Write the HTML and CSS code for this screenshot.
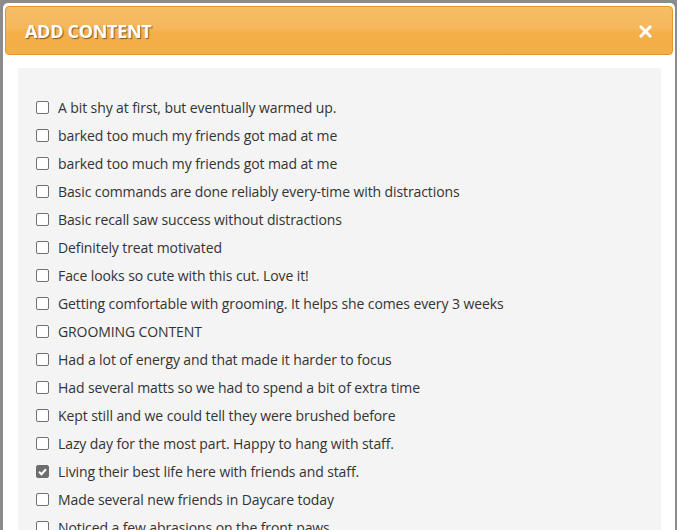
FILE: index.html
```html
<!DOCTYPE html>
<html>
<head>
<meta charset="utf-8">
<link rel="stylesheet" href="styles.css">
</head>
<body>
<div class="dialog">
  <div class="header">
    <span class="title">ADD CONTENT</span>
    <svg class="close" viewBox="0 0 13 13" width="13" height="13"><path d="M2 2 L11 11 M11 2 L2 11" stroke="#fff" stroke-width="3" stroke-linecap="square"/></svg>
  </div>
  <div class="panel">
    <ul class="list">
      <li><span class="box"></span><span>A bit shy at first, but eventually warmed up.</span></li>
      <li><span class="box"></span><span>barked too much my friends got mad at me</span></li>
      <li><span class="box"></span><span>barked too much my friends got mad at me</span></li>
      <li><span class="box"></span><span>Basic commands are done reliably every-time with distractions</span></li>
      <li><span class="box"></span><span>Basic recall saw success without distractions</span></li>
      <li><span class="box"></span><span>Definitely treat motivated</span></li>
      <li><span class="box"></span><span>Face looks so cute with this cut. Love it!</span></li>
      <li><span class="box"></span><span>Getting comfortable with grooming. It helps she comes every 3 weeks</span></li>
      <li><span class="box"></span><span>GROOMING CONTENT</span></li>
      <li><span class="box"></span><span>Had a lot of energy and that made it harder to focus</span></li>
      <li><span class="box"></span><span>Had several matts so we had to spend a bit of extra time</span></li>
      <li><span class="box"></span><span>Kept still and we could tell they were brushed before</span></li>
      <li><span class="box"></span><span>Lazy day for the most part. Happy to hang with staff.</span></li>
      <li><span class="box checked"><svg viewBox="0 0 13 13" width="13" height="13"><path d="M3 6.8 L5.4 9.2 L10 4.2" fill="none" stroke="#fff" stroke-width="2"/></svg></span><span>Living their best life here with friends and staff.</span></li>
      <li><span class="box"></span><span>Made several new friends in Daycare today</span></li>
      <li><span class="box"></span><span>Noticed a few abrasions on the front paws</span></li>
    </ul>
  </div>
</div>
</body>
</html>
```
FILE: styles.css
```css
html, body {
  margin: 0;
  padding: 0;
  height: 100%;
  overflow: hidden;
}
body {
  background: #8b8b8b;
  font-family: "Open Sans", "Noto Sans", sans-serif;
}
.dialog {
  margin: 3px 2px 0 3px;
  background: #fff;
  border-radius: 5px 5px 0 0;
  padding: 3px 2px 0 2px;
  height: 600px;
}
.header {
  height: 47px;
  border: 1px solid #e4952e;
  border-radius: 4px;
  background: linear-gradient(to bottom, #f6be66 0%, #f5b75a 45%, #f4af48 55%, #f4ae46 100%);
  display: flex;
  align-items: center;
  justify-content: space-between;
  padding: 0 20px 0 19px;
}
.title {
  color: #fff;
  font-weight: 700;
  font-size: 18px;
  letter-spacing: -0.3px;
  text-shadow: 1px 1px 1px rgba(90, 60, 20, 0.75);
  padding-top: 1px;
}
.close {
  display: block;
  margin-top: 1px;
}
.panel {
  margin: 13px 12px 0 13px;
  background: #f4f4f4;
  height: 500px;
  padding: 25px 18px 0 18px;
}
.list {
  list-style: none;
  margin: 0;
  padding: 0;
}
.list li {
  height: 28px;
  display: flex;
  align-items: center;
  font-size: 14px;
  color: #333;
  letter-spacing: -0.1px;
  white-space: nowrap;
}
.box {
  width: 11px;
  height: 11px;
  border: 1px solid #707070;
  border-radius: 2px;
  background: #fff;
  margin-right: 9px;
  flex: none;
  position: relative;
}
.box.checked {
  background: #6e6e6e;
  border-color: #6e6e6e;
}
.box svg {
  position: absolute;
  left: -1px;
  top: -1px;
}
```
